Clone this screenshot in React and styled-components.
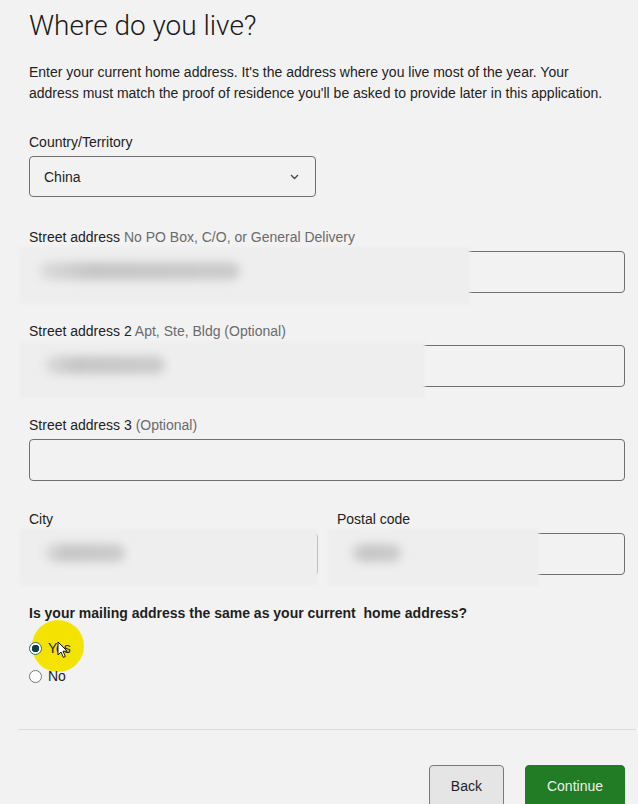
import React from 'react';
import styled, { createGlobalStyle } from 'styled-components';

const GlobalStyle = createGlobalStyle`
  html, body {
    margin: 0;
    background: #f2f2f2;
  }
  body {
    font-family: "Liberation Sans", Arial, sans-serif;
    color: #1f1f1f;
  }
`;

const Page = styled.div`
  width: 638px;
  box-sizing: border-box;
  padding: 0 13px 0 29px;
  overflow: hidden;
  height: 804px;
`;

const Title = styled.h1`
  margin: 0;
  padding-top: 9px;
  font-family: Roboto, "Liberation Sans", sans-serif;
  font-weight: 300;
  font-size: 28px;
  line-height: 34px;
  color: #1b1b1b;
`;

const Intro = styled.p`
  margin: 19px 0 0;
  font-size: 14px;
  line-height: 21px;
  color: #222;
`;

const Form = styled.div`
  display: flex;
  flex-direction: column;
  gap: 29px;
  margin-top: 29px;
`;

const Group = styled.div`
  display: flex;
  flex-direction: column;
  gap: 5px;
  width: ${p => p.$width || '100%'};
  margin-bottom: ${p => p.$extra || 0}px;
`;

const Row = styled.div`
  display: flex;
  gap: 19px;
`;

const Label = styled.label`
  font-size: 14px;
  line-height: 18px;
  color: #222;
`;

const Hint = styled.span`
  color: #6b6b6b;
`;

const Control = styled.div`
  position: relative;
  height: 42px;
`;

const Input = styled.input`
  box-sizing: border-box;
  width: 100%;
  height: 100%;
  border: 1px solid #6f6f6f;
  border-radius: 4px;
  background: transparent;
  font: inherit;
  font-size: 14px;
  padding: 0 14px;
`;

const SelectBox = styled.div`
  box-sizing: border-box;
  width: 287px;
  height: 41px;
  border: 1px solid #6f6f6f;
  border-radius: 4px;
  display: flex;
  align-items: center;
  justify-content: space-between;
  padding: 0 16px 0 14px;
  font-size: 14px;
  color: #1f1f1f;
`;

const Mask = styled.div`
  position: absolute;
  left: -9px;
  top: -4px;
  bottom: -11px;
  width: ${p => p.$width}px;
  background: #eeeeee;
  filter: blur(1.5px);
`;

const Blob = styled.div`
  position: absolute;
  top: 50%;
  margin-top: -14px;
  height: 18px;
  left: ${p => p.$left}px;
  width: ${p => p.$width}px;
  border-radius: 9px;
  background: linear-gradient(90deg, #dcdcdc 0%, #c6c6c6 25%, #cbcbcb 100%);
  filter: blur(4px);
`;

const Question = styled.div`
  font-size: 14px;
  font-weight: bold;
  line-height: 18px;
  color: #1f1f1f;
  white-space: pre;
`;

const Radios = styled.div`
  position: relative;
  display: flex;
  flex-direction: column;
  margin-top: 12px;
`;

const RadioRow = styled.label`
  position: relative;
  display: flex;
  align-items: center;
  gap: 6px;
  height: 28px;
  font-size: 14px;
  color: #1f1f1f;
`;

const RadioDot = styled.span`
  box-sizing: border-box;
  width: 13px;
  height: 13px;
  border-radius: 50%;
  border: 1px solid ${p => (p.$on ? '#2e6f7c' : '#777')};
  background: ${p => (p.$on ? 'radial-gradient(circle, #0f3f4a 0 3.5px, #ffffff 4px)' : '#fff')};
`;

const RadioText = styled.span`
  position: relative;
  z-index: 1;
`;

const Highlight = styled.div`
  position: absolute;
  left: 3px;
  top: -14px;
  width: 52px;
  height: 52px;
  border-radius: 50%;
  background: radial-gradient(circle, #f4e300 0 60%, #f5e51a 88%, rgba(245, 229, 26, 0) 100%);
`;

const Cursor = styled.svg`
  position: absolute;
  left: 28px;
  top: 7px;
  z-index: 2;
`;

const Footer = styled.div`
  margin: 39px -11px 0 -11px;
  border-top: 1px solid #dcdcdc;
  display: flex;
  justify-content: flex-end;
  gap: 21px;
  padding: 35px 11px 0 0;
`;

const Button = styled.button`
  height: 42px;
  padding: 0 21px;
  border-radius: 4px;
  font-family: "Liberation Sans", Arial, sans-serif;
  font-size: 14px;
  border: 1px solid ${p => (p.$primary ? '#217a24' : '#7a7a7a')};
  background: ${p => (p.$primary ? '#227b25' : '#e5e5e5')};
  color: ${p => (p.$primary ? '#e9f3e9' : '#1f1f1f')};
`;

const Chevron = () => (
  <svg width="9" height="6" viewBox="0 0 9 6">
    <path d="M1 1l3.5 3.5L8 1" fill="none" stroke="#444" strokeWidth="1.3" />
  </svg>
);

const Field = ({ label, hint, mask, width }) => (
  <Group $width={width}>
    <Label>
      {label}
      {hint && <Hint> {hint}</Hint>}
    </Label>
    <Control>
      <Input />
      {mask && (
        <Mask $width={mask.width}>
          <Blob $left={mask.left} $width={mask.blob} />
        </Mask>
      )}
    </Control>
  </Group>
);

export default function App() {
  return (
    <Page>
      <GlobalStyle />
      <Title>Where do you live?</Title>
      <Intro>
        Enter your current home address. It's the address where you live most of the year. Your
        <br />
        address must match the proof of residence you'll be asked to provide later in this application.
      </Intro>
      <Form>
        <Group $extra={2}>
          <Label>Country/Territory</Label>
          <SelectBox>
            China
            <Chevron />
          </SelectBox>
        </Group>
        <Field
          label="Street address"
          hint="No PO Box, C/O, or General Delivery"
          mask={{ width: 450, left: 20, blob: 200 }}
        />
        <Field
          label="Street address 2"
          hint="Apt, Ste, Bldg (Optional)"
          mask={{ width: 405, left: 25, blob: 120 }}
        />
        <Field label="Street address 3" hint="(Optional)" />
        <Row>
          <Field label="City" width="289px" mask={{ width: 298, left: 25, blob: 80 }} />
          <Field label="Postal code" width="288px" mask={{ width: 211, left: 23, blob: 50 }} />
        </Row>
        <div>
          <Question>Is your mailing address the same as your current  home address?</Question>
          <Radios>
            <Highlight />
            <RadioRow>
              <RadioDot $on />
              <RadioText>Yes</RadioText>
              <Cursor width="12" height="18" viewBox="0 0 12 18">
                <path
                  d="M1 1v13l3-3 2.4 5.4 2-.9L6 10.2h4.3z"
                  fill="#fff"
                  stroke="#111"
                  strokeWidth="1"
                  strokeLinejoin="round"
                />
              </Cursor>
            </RadioRow>
            <RadioRow>
              <RadioDot />
              <RadioText>No</RadioText>
            </RadioRow>
          </Radios>
        </div>
      </Form>
      <Footer>
        <Button>Back</Button>
        <Button $primary>Continue</Button>
      </Footer>
    </Page>
  );
}
